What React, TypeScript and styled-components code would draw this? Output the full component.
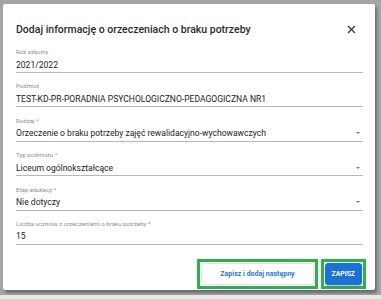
import styled, { createGlobalStyle } from "styled-components";

const GlobalStyle = createGlobalStyle`
  html, body {
    margin: 0;
    padding: 0;
    background: #e9e9e9;
    font-family: Roboto, "Liberation Sans", Arial, sans-serif;
  }
`

const Backdrop = styled.div`
  height: 295px;
  background: #a4a4a4;
  padding: 4px 0 0 3px;
  box-sizing: border-box;
  overflow: hidden;
`

const Dialog = styled.div`
  width: 372px;
  background: #fff;
  border-radius: 2px;
  box-shadow: 2px 3px 3px rgba(0, 0, 0, 0.35);
  display: flex;
  flex-direction: column;
`

const Header = styled.div`
  display: flex;
  align-items: center;
  justify-content: space-between;
  padding: 18px 19px 10px 13px;
`

const Title = styled.h2`
  margin: 0;
  font-size: 10.5px;
  line-height: 15px;
  font-weight: 500;
  color: #2b2b2b;
`

const CloseButton = styled.button`
  border: none;
  background: none;
  padding: 0;
  width: 9px;
  height: 9px;
  display: flex;
  cursor: pointer;
`

const Form = styled.div`
  display: flex;
  flex-direction: column;
  padding: 0 12px 0 13px;
`

const Field = styled.div`
  display: flex;
  flex-direction: column;
  margin-bottom: 8.4px;
`

const Label = styled.label`
  font-size: 6.1px;
  line-height: 10px;
  color: #8e8e8e;
  white-space: nowrap;
`

const Value = styled.div`
  display: flex;
  align-items: center;
  justify-content: space-between;
  height: 15px;
  font-size: 8.55px;
  color: #222;
  border-bottom: 1px solid #b8b8b8;
  white-space: nowrap;
`

const Arrow = styled.span`
  width: 0;
  height: 0;
  margin-right: 3px;
  border-left: 2px solid transparent;
  border-right: 2px solid transparent;
  border-top: 2px solid #7a7a7a;
`

const Actions = styled.div`
  display: flex;
  justify-content: flex-end;
  gap: 3px;
  padding: 5.6px 9px 1px 0;
`

const Highlight = styled.div`
  border: 3px solid #2cb24c;
  padding: 1px 1px;
  display: flex;
`

const Button = styled.button<{ $primary?: boolean }>`
  height: 22px;
  padding: 0 ${p => (p.$primary ? "6px" : "18px")};
  border-radius: 3px;
  font-family: Roboto, "Liberation Sans", Arial, sans-serif;
  font-size: ${p => (p.$primary ? "6.8px" : "7px")};
  font-weight: 700;
  white-space: nowrap;
  cursor: pointer;
  color: ${p => (p.$primary ? "#fff" : "#2a78d0")};
  background: ${p => (p.$primary ? "#1b72d4" : "#fff")};
  border: 1px solid ${p => (p.$primary ? "#1b72d4" : "#e4e4e4")};
  box-shadow: ${p => (p.$primary ? "0 1px 2px rgba(0,0,0,0.3)" : "none")};
`

const fields = [
  { label: "Rok szkolny", value: "2021/2022" },
  { label: "Podmiot", value: "TEST-KD-PR-PORADNIA PSYCHOLOGICZNO-PEDAGOGICZNA NR1" },
  { label: "Rodzaj *", value: "Orzeczenie o braku potrzeby zajęć rewalidacyjno-wychowawczych", select: true },
  { label: "Typ podmiotu *", value: "Liceum ogólnokształcące", select: true },
  { label: "Etap edukacji *", value: "Nie dotyczy", select: true },
  { label: "Liczba uczniów z orzeczeniami o braku potrzeby *", value: "15" },
]

export default function App() {
  return (
    <>
      <GlobalStyle />
      <Backdrop>
        <Dialog>
          <Header>
            <Title>Dodaj informację o orzeczeniach o braku potrzeby</Title>
            <CloseButton aria-label="close">
              <svg width="9" height="9" viewBox="0 0 9 9">
                <path d="M1 1L8 8M8 1L1 8" stroke="#3a3a3a" strokeWidth="1.3" />
              </svg>
            </CloseButton>
          </Header>
          <Form>
            {fields.map(f => (
              <Field key={f.label}>
                <Label>{f.label}</Label>
                <Value>
                  <span>{f.value}</span>
                  {f.select && <Arrow />}
                </Value>
              </Field>
            ))}
          </Form>
          <Actions>
            <Highlight>
              <Button>Zapisz i dodaj następny</Button>
            </Highlight>
            <Highlight>
              <Button $primary>ZAPISZ</Button>
            </Highlight>
          </Actions>
        </Dialog>
      </Backdrop>
    </>
  )
}
